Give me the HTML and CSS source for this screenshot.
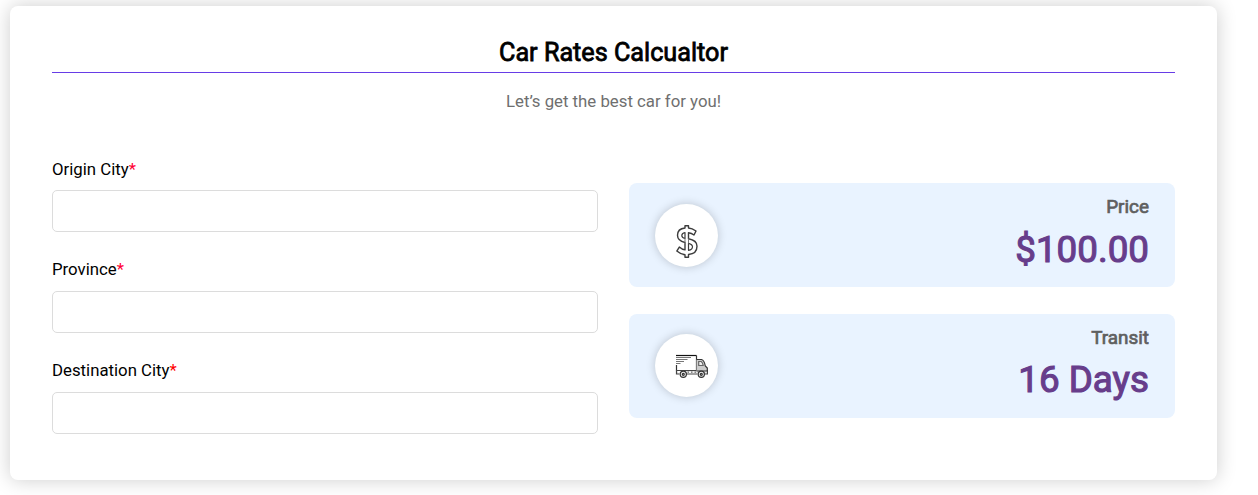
FILE: index.html
```html
<!DOCTYPE html>
<html lang="en">
<head>
<meta charset="utf-8">
<title>Car Rates Calculator</title>
<link rel="stylesheet" href="styles.css">
</head>
<body>
<main class="card">
  <header class="card-header">
    <h1 class="title">Car Rates Calcualtor</h1>
    <p class="subtitle">Let’s get the best car for you!</p>
  </header>
  <div class="columns">
    <form class="form">
      <div class="field">
        <label class="label first" for="origin">Origin City<span class="required">*</span></label>
        <input class="input" id="origin" type="text">
      </div>
      <div class="field">
        <label class="label" for="province">Province<span class="required">*</span></label>
        <input class="input" id="province" type="text">
      </div>
      <div class="field">
        <label class="label" for="destination">Destination City<span class="required pure">*</span></label>
        <input class="input" id="destination" type="text">
      </div>
    </form>
    <div class="results">
      <section class="result price">
        <div class="badge">
          <svg class="dollar" width="22" height="33" viewBox="0 0 22 33" fill="none" stroke="#3c3c3c" stroke-width="1.4" stroke-linejoin="round">
            <path d="M9 3V.7h3.500V3c3 .2 5 1.200 7.500 3l-2 4c-1.700-1.300-3.300-2-5.500-2.300v6c5.500 1 8.500 3 8.500 7.500 0 4.500-3 7.800-8.500 8.300V32.300H9v-2.600c-3.500-.4-6-1.600-8.200-3.600l2.500-4C5 23.700 6.800 24.600 9 24.900V17.500C4.500 16.500 1.500 14.500 1.500 10.300 1.500 6 4.500 3.400 9 3Z"/>
            <path stroke-width="1.2" d="M9 7.500C7 8 5.800 9 5.800 10.500 5.800 12 7 13 9 13.500Z"/>
            <path stroke-width="1.2" d="M12.500 18.300c2.500.6 4 1.700 4 3.500 0 2-1.500 3.200-4 3.500Z"/>
            <path stroke="#777" stroke-width="1" d="M9 13.500v4M12.500 13.700v4.600"/>
          </svg>
        </div>
        <div class="figures">
          <h2 class="name">Price</h2>
          <p class="value">$100.00</p>
        </div>
      </section>
      <section class="result">
        <div class="badge">
          <svg class="truck" width="33" height="24" viewBox="0 0 33 24" fill="none" stroke="#333" stroke-width="1.200">
            <path stroke="#111" d="M1 1.500h20.500"/>
            <path d="M21.500 1.500v14.500M1.500 11v5.500h19"/>
            <path d="M1 3.500h15M1 5.500h11.500M1 7.500h8M1 9.500h4.500" stroke="#777"/>
            <path d="M1.500 16.500h31v3.500h-3M1.500 16.500V20h3M11 20h11.500" fill="#e6e6e6" stroke="#444"/>
            <path d="M21.500 5.500h5c2 .5 3.200 3 3.800 6.500l2 2v3H21.500" fill="#ccc"/>
            <path d="M23.700 7.500h2.500c1.200.8 1.700 2.300 2 4h-4.500Z" fill="#eee" stroke="#666"/>
            <path stroke="#666" d="M12.500 18.200h1.500M16 18.200h1.500M19.500 18.200h1.500"/>
            <circle cx="8.300" cy="20.300" r="3.100" fill="#eee"/><circle cx="8.300" cy="20.300" r="1"/>
            <circle cx="26.300" cy="20.300" r="3.100" fill="#eee"/><circle cx="26.300" cy="20.300" r="1"/>
          </svg>
        </div>
        <div class="figures">
          <h2 class="name">Transit</h2>
          <p class="value">16 Days</p>
        </div>
      </section>
    </div>
  </div>
</main>
</body>
</html>
```
FILE: styles.css
```css
* { box-sizing: border-box; }

body {
  margin: 0;
  padding: 6px 41px 15px 10px;
  height: 495px;
  overflow: hidden;
  background: #fff;
  font-family: Roboto, "Liberation Sans", sans-serif;
  font-size: 16.8px;
  color: #000;
}

h1, h2, p { margin: 0; font-weight: 400; }

.card {
  height: 474px;
  padding: 30px 42px 0;
  border-radius: 8px;
  background: #fff;
  box-shadow: 0 0 20px rgba(0, 0, 0, .2);
}

.card-header { text-align: center; }

.title {
  height: 37px;
  padding-top: 1px;
  border-bottom: 1px solid #673de6;
  font-size: 25.200px;
  line-height: 32px;
  -webkit-text-stroke: .8px #000;
}

.subtitle {
  margin-top: 16px;
  line-height: 24px;
  color: #6f6f6f;
}

.columns {
  display: grid;
  grid-template-columns: 1fr 1fr;
  gap: 31px;
  margin-top: 45px;
}

.form { display: flex; flex-direction: column; gap: 27px; }

.field { display: flex; flex-direction: column; height: 74px; }

.label { height: 32px; line-height: 20px; }
.label.first { line-height: 22px; }

.required { color: #ff0033; }
.required.pure { color: #f00; }

.input {
  width: 100%;
  height: 42px;
  padding: 0 12px;
  border: 1px solid #dcdcdc;
  border-radius: 5px;
  background: #fff;
  font: inherit;
}

.results {
  display: flex;
  flex-direction: column;
  gap: 27px;
  padding-top: 25px;
}

.result {
  display: flex;
  justify-content: space-between;
  height: 104px;
  padding: 0 26px;
  border-radius: 8px;
  background: #e9f3ff;
}

.badge {
  display: flex;
  justify-content: center;
  width: 63px;
  height: 63px;
  margin-top: 20px;
  border-radius: 50%;
  background: #fff;
  box-shadow: 0 0 10px rgba(0, 0, 0, .2);
}

.price .badge { margin-top: 21px; }

.dollar { margin-top: 21px; }
.truck { margin: 20px 0 0 10px; }

.figures { text-align: right; }

.name {
  padding-top: 12px;
  font-size: 18.900px;
  line-height: 24px;
  color: #5f5f5f;
  -webkit-text-stroke: .7px #5f5f5f;
}

.value {
  margin-top: 6px;
  font-size: 36.800px;
  line-height: 48px;
  color: #673d8b;
  -webkit-text-stroke: 1.100px #673d8b;
}

.price .value { margin-top: 7px; }
```
